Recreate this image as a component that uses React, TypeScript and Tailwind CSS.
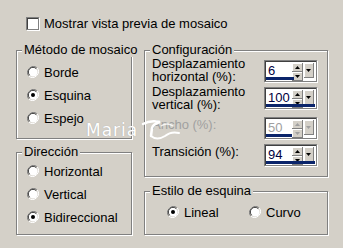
import type { ReactNode } from 'react'

const font = { fontFamily: 'Tahoma, "Liberation Sans", sans-serif' }

function Radio({ checked }: { checked?: boolean }) {
  return (
    <svg width="12" height="12" viewBox="0 0 12 12" className="shrink-0">
      <path d="M10.2 1.8A6 6 0 0 0 1.8 10.2" fill="none" stroke="#808080" strokeWidth="1" />
      <path d="M10.2 1.8A6 6 0 0 1 1.8 10.2" fill="none" stroke="#ffffff" strokeWidth="1" />
      <circle cx="6" cy="6" r="4.6" fill="#fff" />
      <path d="M9.3 2.7A4.6 4.6 0 0 0 2.7 9.3" fill="none" stroke="#404040" strokeWidth="1" />
      {checked && <circle cx="6" cy="6" r="2" fill="#000" />}
    </svg>
  )
}

function RadioRow({ label, checked, className }: { label: string; checked?: boolean; className?: string }) {
  return (
    <div className={`flex items-center gap-[5px] h-[14px] ${className ?? ''}`}>
      <Radio checked={checked} />
      <span className="text-[13px] leading-none text-black whitespace-nowrap">{label}</span>
    </div>
  )
}

// legend sits inside the fieldset padding, so legendMl pulls it back to the box edge
function Group({
  title,
  className,
  legendMl,
  children,
}: {
  title: string
  className?: string
  legendMl: string
  children: ReactNode
}) {
  return (
    <fieldset
      className={`min-w-0 border border-[#808080] shadow-[inset_1px_1px_0_#fff,1px_1px_0_#fff] ${className ?? ''}`}
    >
      <legend className={`${legendMl} px-[2px] bg-[#d4d0c8] text-[13px] leading-[14px] text-black whitespace-nowrap`}>
        {title}
      </legend>
      {children}
    </fieldset>
  )
}

function Arrow({ up, disabled }: { up?: boolean; disabled?: boolean }) {
  return (
    <svg width="5" height="3" viewBox="0 0 5 3">
      <path d={up ? 'M2.5 0L5 3H0z' : 'M0 0H5L2.5 3z'} fill={disabled ? '#a0a0a0' : '#000'} />
    </svg>
  )
}

function Spinner({ value, bar, disabled }: { value: string; bar: number; disabled?: boolean }) {
  const btn =
    'bg-[#d4d0c8] border-r border-b border-[#808080] shadow-[inset_1px_1px_0_#fff] flex items-center justify-center'
  return (
    <div className="w-[53px] h-[22px] shrink-0 bg-white border border-[#808080] shadow-[inset_1px_1px_0_#404040,1px_1px_0_#fff] flex">
      <div className="flex-1 relative">
        <span
          className={`absolute left-[3px] top-[3px] text-[13px] leading-none ${disabled ? 'text-[#a0a0a0]' : 'text-[#000040]'}`}
        >
          {value}
        </span>
        <div className="absolute left-[1px] bottom-[1px] h-[3px] bg-[#0a246a]" style={{ width: bar }} />
      </div>
      <div className="flex flex-col mt-[2px] w-[11px]">
        <div className={`h-[9px] ${btn}`}>
          <Arrow up disabled={disabled} />
        </div>
        <div className={`h-[9px] ${btn}`}>
          <Arrow disabled={disabled} />
        </div>
      </div>
      <div className={`w-[10px] mt-[2px] mb-[3px] mr-[2px] ml-[1px] ${btn}`}>
        <Arrow disabled={disabled} />
      </div>
    </div>
  )
}

function ConfigRow({
  label,
  children,
  h,
  labelTop,
  spinTop,
}: {
  label: ReactNode
  children: ReactNode
  h: string
  labelTop: string
  spinTop: string
}) {
  return (
    <div className={`flex items-start justify-between ${h}`}>
      <div className={`text-[13px] leading-[13px] text-black ${labelTop}`}>{label}</div>
      <div className={spinTop}>{children}</div>
    </div>
  )
}

export default function App() {
  return (
    <div className="w-[343px] h-[248px] bg-[#d4d0c8] relative overflow-hidden" style={font}>
      <div className="pt-[17px] pl-[26px] flex items-center gap-[5px] h-[30px]">
        <div className="w-[13px] h-[13px] bg-white border border-[#808080] shadow-[inset_1px_1px_0_#404040,1px_1px_0_#fff]" />
        <span className="text-[13px] leading-none text-black">Mostrar vista previa de mosaico</span>
      </div>

      <div className="flex gap-[12px] pl-[16px] mt-[13px]">
        <div className="w-[116px] flex flex-col gap-[6px]">
          <Group
            title="Método de mosaico"
            legendMl="-ml-[5px]"
            className="h-[96px] pl-[10px] pt-[8px] flex flex-col gap-[9px]"
          >
            <RadioRow label="Borde" />
            <RadioRow label="Esquina" checked />
            <RadioRow label="Espejo" />
          </Group>
          <Group title="Dirección" legendMl="-ml-[5px]" className="h-[90px] pl-[10px] pt-[5px] flex flex-col gap-[9px]">
            <RadioRow label="Horizontal" />
            <RadioRow label="Vertical" />
            <RadioRow label="Bidireccional" checked />
          </Group>
        </div>

        <div className="w-[184px] flex flex-col gap-[7px]">
          <Group title="Configuración" legendMl="-ml-[2px]" className="h-[134px] pl-[7px] pr-[10px]">
            <ConfigRow h="h-[28px]" labelTop="mt-0" spinTop="mt-[3px]" label={<>Desplazamiento<br />horizontal (%):</>}>
              <Spinner value="6" bar={28} />
            </ConfigRow>
            <ConfigRow h="h-[32px]" labelTop="mt-0" spinTop="mt-[2px]" label={<>Desplazamiento<br />vertical (%):</>}>
              <Spinner value="100" bar={49} />
            </ConfigRow>
            <ConfigRow h="h-[27px]" labelTop="mt-[1px]" spinTop="mt-0" label={<span className="text-[#a0a0a0]">Ancho (%):</span>}>
              <Spinner value="50" bar={26} disabled />
            </ConfigRow>
            <ConfigRow h="h-[23px]" labelTop="mt-[1px]" spinTop="mt-0" label="Transición (%):">
              <Spinner value="94" bar={49} />
            </ConfigRow>
          </Group>
          <Group title="Estilo de esquina" legendMl="-ml-[17px]" className="h-[51px] pl-[22px] pt-[7px] flex">
            <RadioRow label="Lineal" checked className="w-[82px]" />
            <RadioRow label="Curvo" />
          </Group>
        </div>
      </div>

      <div className="absolute left-[86px] top-[119px] flex items-end pointer-events-none">
        <span
          className="text-[17px] leading-none text-white tracking-[1px] [text-shadow:0_0_1px_#a0a0a0]"
          style={{ fontFamily: '"DejaVu Sans", sans-serif' }}
        >
          Maria
        </span>
        <svg width="40" height="26" viewBox="0 0 40 26" className="ml-[3px] -mb-[6px]">
          <path d="M2 5 Q9 1 19 3 Q12 5 11 9 L10 17" fill="none" stroke="#fff" strokeWidth="2.5" strokeLinecap="round" />
          <path d="M10 17 Q16 22 24 17 Q30 12 38 14" fill="none" stroke="#fff" strokeWidth="2" strokeLinecap="round" />
          <path d="M20 7 Q26 3 32 7" fill="none" stroke="#fff" strokeWidth="1.5" opacity="0.8" />
        </svg>
      </div>
    </div>
  )
}
